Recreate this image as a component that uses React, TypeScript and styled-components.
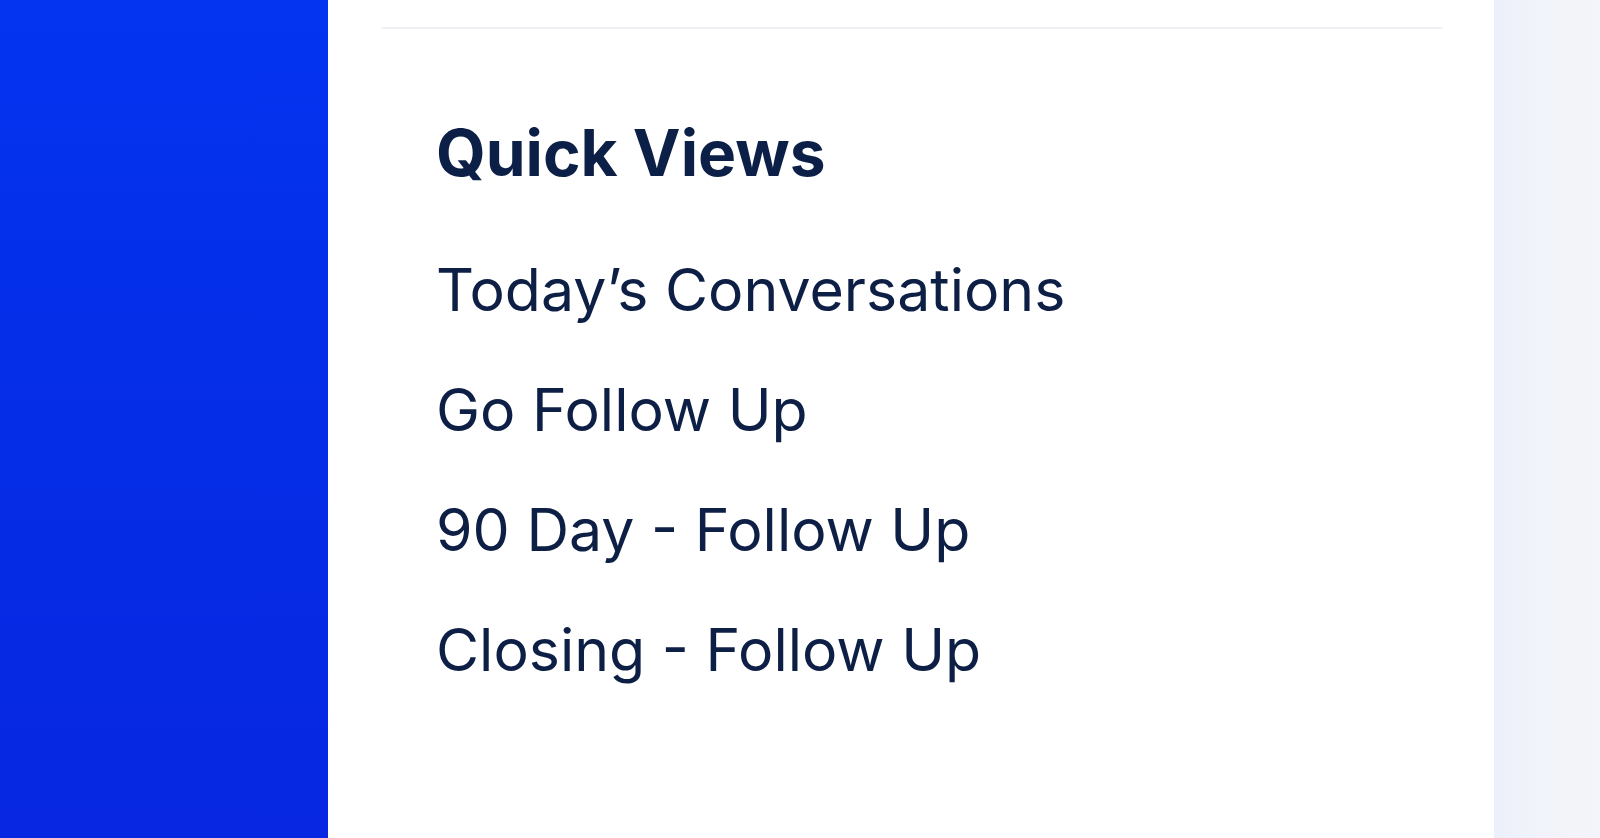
import styled, { createGlobalStyle } from 'styled-components';

const GlobalStyle = createGlobalStyle`
  html, body {
    margin: 0;
    padding: 0;
    height: 100%;
    overflow: hidden;
  }
  #root {
    height: 100%;
  }
`;

const views = ['Today\u2019s Conversations', 'Go Follow Up', '90 Day - Follow Up', 'Closing - Follow Up'];

export default function App() {
  return (
    <Layout>
      <GlobalStyle />
      <Sidebar />
      <Panel>
        <Divider />
        <QuickViews>
          <Title>Quick Views</Title>
          <ViewList>
            {views.map(view => (
              <ViewItem key={view}>{view}</ViewItem>
            ))}
          </ViewList>
        </QuickViews>
      </Panel>
      <Backdrop />
    </Layout>
  );
}

const Layout = styled.div`
  display: flex;
  height: 100vh;
  font-family: Inter, 'Noto Sans', sans-serif;
`;

const Sidebar = styled.aside`
  width: 328px;
  flex-shrink: 0;
  background: linear-gradient(180deg, #0434f0 0%, #052ce6 55%, #0727e2 100%);
`;

const Panel = styled.main`
  width: 1166px;
  flex-shrink: 0;
  background-color: #ffffff;
  padding: 27px 52px 0 54px;
  box-sizing: border-box;
`;

const Divider = styled.hr`
  margin: 0;
  border: none;
  height: 2px;
  background-color: #eff0f4;
`;

const QuickViews = styled.section`
  padding: 84px 0 0 54px;
`;

const Title = styled.h2`
  margin: 0;
  font-size: 64px;
  line-height: 80px;
  font-weight: 700;
  color: #0b1f47;
`;

const ViewList = styled.ul`
  list-style: none;
  margin: 60px 0 0;
  padding: 0;
  display: flex;
  flex-direction: column;
  gap: 46px;
`;

const ViewItem = styled.li`
  font-size: 59px;
  line-height: 74px;
  font-weight: 400;
  color: #0d1f45;
  cursor: pointer;
`;

const Backdrop = styled.div`
  flex: 1;
  background: linear-gradient(90deg, #ecf0fa 0%, #f1f3fa 40%, #f4f5fa 100%);
`;
